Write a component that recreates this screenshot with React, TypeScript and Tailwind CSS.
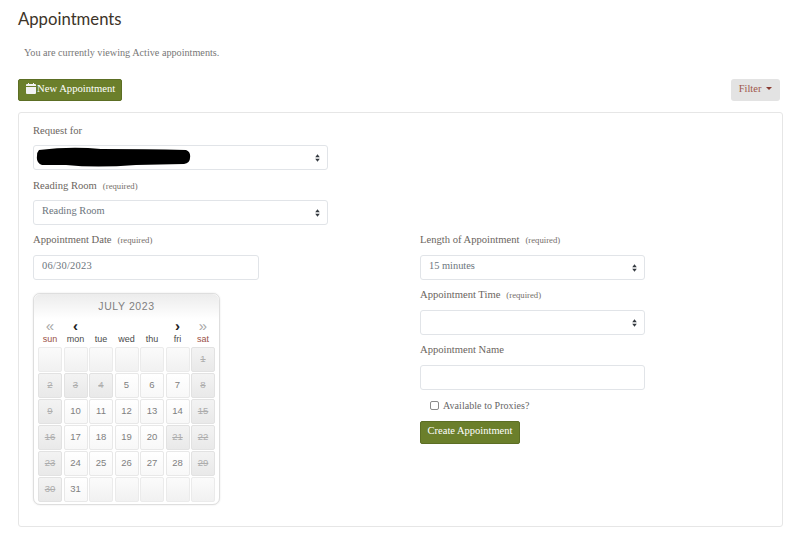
import React from "react";

const serif = "font-['Liberation_Serif',serif]";

function Arrows() {
  return (
    <svg className="absolute right-[7px] top-1/2 -translate-y-1/2" width="5" height="8" viewBox="0 0 5 8">
      <path d="M2.5 0.3 L4.8 3.2 H0.2 Z M2.5 7.7 L0.2 4.8 H4.8 Z" fill="#343a40" />
    </svg>
  );
}

function Label({ text, req }: { text: string; req?: boolean }) {
  return (
    <div className="h-[14px] flex items-center text-[10.6px] leading-[14px] text-[#6b6560]">
      <span>{text}</span>
      {req && <span className="ml-[6px] text-[8.7px] text-[#756f6a]">(required)</span>}
    </div>
  );
}

function SelectBox({ value, w }: { value?: string; w: string }) {
  return (
    <div className={`relative h-[25px] ${w} bg-white border border-[#e1e4e8] rounded-[3px] flex items-center pl-[8px] pb-[4px] text-[10.4px] text-[#6c757d]`}>
      <span>{value}</span>
      <Arrows />
    </div>
  );
}

function Header({ t, c }: { t: string; c: string }) {
  return <div className={`w-[24px] text-center text-[9px] leading-[12px] ${c}`}>{t}</div>;
}

type C = { n?: number; off?: boolean };

function Cell({ n, off }: C) {
  const base = "w-[24px] h-[25px] rounded-[2px] border flex items-center justify-center text-[9.5px] ";
  if (n === undefined)
    return <div className={base + "border-[#ebebeb] bg-gradient-to-b from-[#fbfbfb] to-[#f1f1f1]"} />;
  if (off)
    return (
      <div className={base + "bg-gradient-to-b from-[#f3f3f3] to-[#e9e9e9] border-[#e2e2e2] text-[#adadad] line-through"}>
        {n}
      </div>
    );
  return <div className={base + "border-[#e8e8e8] bg-gradient-to-b from-white to-[#f8f8f8] text-[#808080]"}>{n}</div>;
}

const offDays = [1, 2, 3, 4, 8, 9, 15, 16, 21, 22, 23, 29, 30];
const cells: C[] = [
  ...Array(6).fill({}),
  ...Array.from({ length: 31 }, (_, i) => ({ n: i + 1, off: offDays.includes(i + 1) })),
  ...Array(5).fill({}),
];

function Calendar() {
  return (
    <div className="w-[187px] h-[212px] mt-[13px] rounded-[7px] border border-[#dedede] bg-white shadow-[0_0_2px_#e4e4e4] font-['Liberation_Sans',sans-serif] flex flex-col items-center">
      <div className="w-full h-[25px] rounded-t-[7px] bg-gradient-to-b from-[#ececec] to-white flex items-center justify-center text-[10.5px] tracking-[0.6px] text-[#808080]">
        JULY 2023
      </div>
      <div className="w-[177px] h-[14px] grid grid-cols-7 gap-x-[1.5px] items-center text-center text-[15px] leading-[14px]">
        <span className="text-[#a8a8a8]">«</span>
        <span className="text-[#222] font-bold">‹</span>
        <span />
        <span />
        <span />
        <span className="text-[#222] font-bold">›</span>
        <span className="text-[#a8a8a8]">»</span>
      </div>
      <div className="w-[177px] h-[12px] grid grid-cols-7 gap-x-[1.5px] items-center">
        <Header t="sun" c="text-[#9a4f45]" />
        <Header t="mon" c="text-[#4a4a4a]" />
        <Header t="tue" c="text-[#4a4a4a]" />
        <Header t="wed" c="text-[#4a4a4a]" />
        <Header t="thu" c="text-[#4a4a4a]" />
        <Header t="fri" c="text-[#4a4a4a]" />
        <Header t="sat" c="text-[#9a4f45]" />
      </div>
      <div className="w-[177px] mt-[2px] grid grid-cols-7 gap-x-[1.5px] gap-y-[1px]">
        {cells.map((c, i) => (
          <Cell key={i} {...c} />
        ))}
      </div>
    </div>
  );
}

export default function App() {
  return (
    <div className={`w-[800px] h-[539px] bg-white overflow-hidden pl-[18px] pr-[17px] ${serif}`}>
      <h1 className="pt-[9px] h-[36px] text-[16.7px] leading-[20px] text-[#3d3428] font-['Lato',sans-serif]">
        Appointments
      </h1>
      <p className="mt-[10px] pl-[6px] h-[14px] text-[10.2px] leading-[14px] text-[#777]">
        You are currently viewing Active appointments.
      </p>
      <div className="mt-[19px] h-[23px] flex justify-between items-start">
        <button className="h-[22px] w-[104px] bg-[#6b7f2b] border border-[#5c6e24] rounded-[2px] text-white text-[10.65px] flex items-center pl-[7px] pb-[3px]">
          <svg width="10" height="11" viewBox="0 0 10 11" className="mr-[1px]">
            <path d="M0 3 V2 Q0 1 1 1 H2 V0 H3 V1 H7 V0 H8 V1 H9 Q10 1 10 2 V3 Z M0 4 H10 V10 Q10 11 9 11 H1 Q0 11 0 10 Z" fill="#f2f2f2" />
          </svg>
          New Appointment
        </button>
        <button className="h-[22px] w-[49px] mr-[3px] bg-[#e3e3e3] rounded-[3px] text-[#a0564a] text-[10.5px] flex items-center justify-center gap-[5px] pb-[3px]">
          Filter
          <span className="w-0 h-0 border-x-[3px] border-x-transparent border-t-[3px] border-t-[#8a3a30]" />
        </button>
      </div>
      <div className="mt-[10px] w-[765px] h-[415px] border border-[#e6e6e6] rounded-[3px] pl-[14px] pt-[11px] flex flex-col">
        <Label text="Request for" />
        <div className="relative mt-[7px] w-[295px]">
          <SelectBox w="w-[295px]" />
          <svg className="absolute left-[3px] top-[2px]" width="155" height="20" viewBox="0 0 155 20">
            <path d="M3 3 Q35 -1 65 2 Q110 2 150 3 Q155 5 154 11 Q154 16 148 17 L100 18 Q60 21 30 18 L6 18 Q0 16 1 9 Q1 5 3 3 Z" fill="#000" />
          </svg>
        </div>
        <div className="mt-[9px]">
          <Label text="Reading Room" req />
        </div>
        <div className="mt-[7px]">
          <SelectBox w="w-[295px]" value="Reading Room" />
        </div>
        <div className="mt-[8px] flex">
          <div className="w-[387px]">
            <Label text="Appointment Date" req />
            <div className="mt-[8px] h-[25px] w-[226px] border border-[#e1e4e8] rounded-[3px] flex items-center pl-[8px] pb-[4px] text-[10.5px] text-[#6c757d] tracking-[0.2px]">
              06/30/2023
            </div>
            <Calendar />
          </div>
          <div className="w-[225px] flex flex-col">
            <Label text="Length of Appointment" req />
            <div className="mt-[8px]">
              <SelectBox w="w-[225px]" value="15 minutes" />
            </div>
            <div className="mt-[8px]">
              <Label text="Appointment Time" req />
            </div>
            <div className="mt-[8px]">
              <SelectBox w="w-[225px]" />
            </div>
            <div className="mt-[8px]">
              <Label text="Appointment Name" />
            </div>
            <div className="mt-[8px] h-[25px] w-[225px] border border-[#e1e4e8] rounded-[3px]" />
            <div className="mt-[8px] h-[14px] pl-[10px] flex items-center text-[10px] text-[#666] tracking-[0.05px]">
              <span className="w-[9px] h-[9px] border border-[#8a8a8a] rounded-[2px] bg-white mr-[4px] mt-[1px]" />
              Available to Proxies?
            </div>
            <button className="mt-[9px] h-[23px] w-[100px] bg-[#6b7f2b] border border-[#5c6e24] rounded-[2px] text-white text-[10.5px] flex items-center justify-center pb-[4px]">
              Create Appointment
            </button>
          </div>
        </div>
      </div>
    </div>
  );
}
